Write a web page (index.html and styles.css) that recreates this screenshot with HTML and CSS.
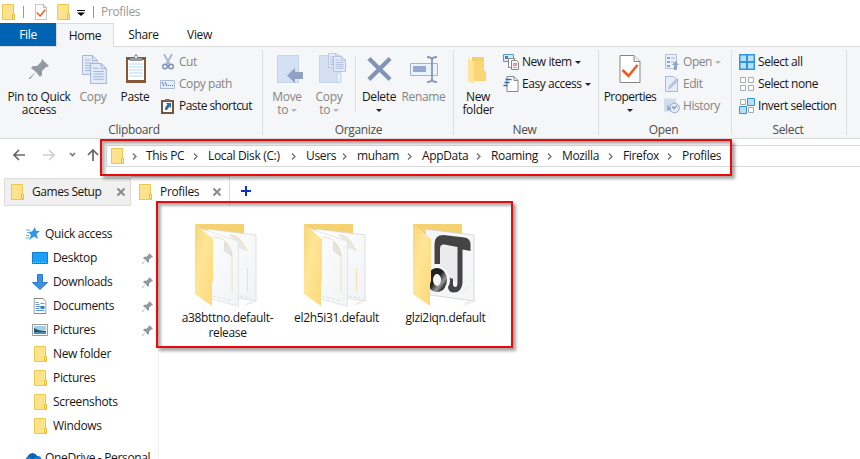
FILE: index.html
```html
<!DOCTYPE html>
<html lang="en">
<head>
<meta charset="utf-8">
<title>Profiles</title>
<link rel="stylesheet" href="styles.css">
</head>
<body>
<svg class="defs" aria-hidden="true">
  <defs>
    <linearGradient id="flap" x1="0" y1="0" x2="1" y2="1"><stop offset="0" stop-color="#f7d67a"/><stop offset=".4" stop-color="#ffe597"/><stop offset="1" stop-color="#fbd979"/></linearGradient>
    <linearGradient id="paper" x1="0" y1="0" x2="1" y2="1"><stop offset="0" stop-color="#fff"/><stop offset="1" stop-color="#f1f3f4"/></linearGradient>
    <linearGradient id="shade" x1="0" y1="0" x2="1" y2="0"><stop offset="0" stop-color="#bbb"/><stop offset="1" stop-color="#fff" stop-opacity="0"/></linearGradient>
    <linearGradient id="ring" x1="0" y1="0" x2="1" y2="1"><stop offset="0" stop-color="#222"/><stop offset=".45" stop-color="#222"/><stop offset=".75" stop-color="#999"/><stop offset="1" stop-color="#111"/></linearGradient>
  </defs>
  <symbol id="folder" viewBox="0 0 13 16"><path d="M.5.5h11v10h1v5H.5z" fill="#ffe38c" stroke="#edc84f"/><path d="M10.500 15v-4.500h2V15z" fill="#fff0b5" stroke="#e5bd3f"/></symbol>
  <symbol id="pin" viewBox="0 0 20 20"><path d="M13 0l7 7-2 1-1 0-4 4 0 4-2 2-4-5-6 7-1 0 0-1 7-6-5-4 2-2 4 0 4-4z" fill="#909ba1"/></symbol>
  <symbol id="check" viewBox="0 0 21 28"><path d="M.5.5h14l6 6v21H.5z" fill="#fff" stroke="#858585"/><path d="M14.500.5v6h6" fill="#eee" stroke="#858585"/><path d="M3 15l6 6 9-11" fill="none" stroke="#f1591b" stroke-width="2.500"/></symbol>
  <symbol id="sheet" viewBox="0 0 16 20"><path d="M.5.5h10l5 5v14H.5z" fill="#e3ebf8" stroke="#a8b8d5"/><path d="M10.500.5v5h5M3 5h5M3 8h10M3 10.500h10M3 13h10M3 15.500h10" fill="none" stroke="#a4b5d5"/></symbol>
  <symbol id="copy" viewBox="0 0 25 29"><use href="#sheet" width="16" height="20"/><use href="#sheet" x="8" y="8" width="17" height="21"/></symbol>
  <symbol id="paste" viewBox="0 0 20 29"><path d="M0 3h20v26H0z" fill="#865835"/><path d="M2 6h16v20H2z" fill="#fff"/><path d="M3 10h14M3 13h14M3 16h14M3 19h14M3 22h14" stroke="#b3d9f1"/><path d="M4 7V4h4c0-5 4-5 4 0h4v3z" fill="#949ca2"/><circle cx="10" cy="3" r="1" fill="#fff"/></symbol>
  <symbol id="cut" viewBox="0 0 12 16"><path d="M2 0l6 11M10 0L4 11" stroke="#a4b5d0" stroke-width="1.800"/><circle cx="3" cy="12.500" r="2.300" fill="none" stroke="#7c91b9" stroke-width="1.500"/><circle cx="9" cy="12.500" r="2.300" fill="none" stroke="#7c91b9" stroke-width="1.500"/></symbol>
  <symbol id="path" viewBox="0 0 15 9"><path d="M.5.5h14v8H.5z" fill="#e4edf9" stroke="#abbdd8"/><path d="M2 2l2 4M5 2l2 4M8 5.500h1M10 5.500h1M12 5.500h1" stroke="#5f78a4"/></symbol>
  <symbol id="shortcut" viewBox="0 0 13 16"><path d="M0 2h13v14H0z" fill="#75543c"/><path d="M2 4h9v10H2z" fill="#fff"/><path d="M4 3V1h5v2z" fill="#777"/><path d="M5 5h5v5L8.500 8.500 6 12H4c0-3 1-4 2.500-5.500z" fill="#2c6fad"/></symbol>
  <symbol id="move" viewBox="0 0 26 29"><path d="M.5.5h21v27H.5z" fill="#d3e1f3" stroke="#c4d4e9"/><path d="M17 17h4v10h-4z" fill="#e8f0fb" stroke="#c4d4e9"/><path d="M10 20.500l8-7.500v4h8v7h-8v4z" fill="#8fa2c2"/></symbol>
  <symbol id="copyto" viewBox="0 0 27 31"><path d="M.5 2.500h21v27H.5z" fill="#d3e1f3" stroke="#c4d4e9"/><path d="M18 20h4v9h-4z" fill="#e8f0fb" stroke="#c4d4e9"/><use href="#sheet" x="9" width="12" height="15"/><use href="#sheet" x="14" y="3" width="13" height="16"/></symbol>
  <symbol id="delete" viewBox="0 0 26 26"><path d="M2 2l22 22M24 2L2 24" stroke="#8294b5" stroke-width="4.500"/></symbol>
  <symbol id="rename" viewBox="0 0 28 27"><path d="M.5 7.500h27v12H.5z" fill="#eaf2fc" stroke="#a2b4d3"/><path d="M3 10h13v6H3z" fill="#96a9ca"/><path d="M17 1c3 0 5 1 5 3v19c0 2-2 3-5 3M27 1c-3 0-5 1-5 3v19c0 2 2 3 5 3" fill="none" stroke="#8598ba" stroke-width="1.800"/></symbol>
  <symbol id="newfolder" viewBox="0 0 19 28"><path d="M4 0h12v14h2v10H4z" fill="#f5cf6b"/><path d="M0 1l6 4v22l-6-3z" fill="#ffe49a"/><path d="M6 4h10v10h2v10H6z" fill="#f9d573"/></symbol>
  <symbol id="newitem" viewBox="0 0 16 16"><path d="M.5.5h10v7H.5z" fill="#d7ecfb" stroke="#5599ca"/><path d="M2 2h3v3H2z" fill="#4384b6"/><path d="M5.500 4.500h6v9h-6z" fill="#fff" stroke="#888"/><path d="M8.500 6.500h5l2 2v7h-7z" fill="#fff" stroke="#858585"/><path d="M10 9.500h4M10 11.500h4M10 13.500h4" stroke="#8aacd2"/><path d="M10 10.500h4" stroke="#e7a197"/></symbol>
  <symbol id="easy" viewBox="0 0 15 16"><path d="M3.500.5h7l4 4v11h-11z" fill="#fff" stroke="#888"/><path d="M10.500.5v4h4" fill="none" stroke="#888"/><path d="M2 3.500h6M1 6.500h5M0 9.500h4" stroke="#286dac" stroke-width="1.400"/></symbol>
  <symbol id="open" viewBox="0 0 14 16"><path d="M.5.500h11v14H.5z" fill="#eaf1fa" stroke="#b0c0d9"/><path d="M2 3h3v2H2zM2 7h3v2H2zM2 11h3v2H2z" fill="#8fa4c8"/><path d="M6 4h4M6 8h3" stroke="#a8b9d5"/><path d="M10.500 7l3.500 4h-2v5H9v-5H7z" fill="#90a4c6"/></symbol>
  <symbol id="edit" viewBox="0 0 14 16"><path d="M.5.500h8l4 4v11H.5z" fill="#e5edf8" stroke="#a9bad5"/><path d="M3 14l1-4 8-8 2 2-8 8z" fill="#b3c4df"/></symbol>
  <symbol id="history" viewBox="0 0 16 15"><path d="M0 0h12v13H0z" fill="#cfddef"/><circle cx="10.500" cy="9.500" r="4.800" fill="#e4ebf7" stroke="#96a8c8"/><path d="M8 8l2 2 3-3M4 7v4l3-1" fill="none" stroke="#8498bd" stroke-width="1.300"/></symbol>
  <symbol id="selall" viewBox="0 0 16 16"><path d="M0 0h16v16H0z" fill="#2f94e1"/><path d="M1.500 1.500h5.500v5.500H1.500zM9 1.500h5.500v5.500H9zM1.500 9h5.500v5.500H1.500zM9 9h5.500v5.500H9z" fill="#b8e0fb"/></symbol>
  <symbol id="selnone" viewBox="0 0 16 16"><path d="M1.500 1.500h5v5h-5zM9.500 1.500h5v5h-5zM1.500 9.500h5v5h-5zM9.500 9.500h5v5h-5z" fill="#fff" stroke="#aaa"/></symbol>
  <symbol id="selinv" viewBox="0 0 16 16"><path d="M1.500 1.500h5v5h-5zM9.500 9.500h5v5h-5z" fill="#fff" stroke="#aaa"/><path d="M8.500.5h7v7h-7zM.5 8.500h7v7h-7z" fill="#b8e0fb" stroke="#2f94e1"/></symbol>
  <symbol id="star" viewBox="0 0 14 13"><path d="M9 0l1 4 4 0-3.500 3 1.500 5-4-2.500-5 3.500 2-5L2 5l4-.5z" fill="#2f98e5"/><path d="M0 3h4M1 5.500h3M0 8.500h3M0 11h3" stroke="#57aee8"/></symbol>
  <symbol id="desktop" viewBox="0 0 16 12"><path d="M.5.500h15v11H.5z" fill="#1ba1fa" stroke="#137bc8"/><path d="M1 10.500h14" stroke="#8bd0ff" stroke-dasharray="1 1"/></symbol>
  <symbol id="down" viewBox="0 0 16 16"><path d="M5.500.5h5v8h5L8 15.500.5 8.500h5z" fill="#3e91de" stroke="#2b7acb"/></symbol>
  <symbol id="doc" viewBox="0 0 13 16"><path d="M.5.500h9l3 3v12H.5z" fill="#fff" stroke="#888"/><path d="M2 4.500h3M2 6.500h4M7 5.500h4M2 8.500h9M2 10.500h4M2 12.500h9" stroke="#5e9fce"/><path d="M7 8h4v3H7z" fill="#3384c3"/></symbol>
  <symbol id="pic" viewBox="0 0 16 12"><path d="M.5.500h15v11H.5z" fill="#fff" stroke="#999"/><path d="M2 2h12v4H2z" fill="#9dcdf0"/><path d="M2 4l4 2 8 1v3H2z" fill="#24546b"/><path d="M2 8h12v2H2z" fill="#5089b2"/></symbol>
  <symbol id="cloud" viewBox="0 0 18 11"><path d="M4 10a4 4 0 010-7 5 5 0 019 0 4 4 0 011 8H4z" fill="#1679cf"/><path d="M4 3a5 5 0 019 0L9 6z" fill="#0964b5"/></symbol>
  <symbol id="chev" viewBox="0 0 5 7"><path d="M1 .5l3 3-3 3" fill="none" stroke="#727272" stroke-width="1.300"/></symbol>
  <symbol id="x" viewBox="0 0 8 8"><path d="M.5.5l7 7M7.500.5l-7 7" stroke="#8a8a8a" stroke-width="2"/></symbol>
  <symbol id="fback" viewBox="0 0 72 84"><path d="M50 82l16-3c4-2 3-4-5-5z" fill="url(#shade)" opacity=".5"/><path d="M0 1h49v28H0z" fill="#f5d16f"/></symbol>
  <symbol id="fflap" viewBox="0 0 72 84"><path d="M0 1l18 15v42l-1 3v22L0 71z" fill="url(#flap)"/></symbol>
  <symbol id="bigfolder" viewBox="0 0 72 84">
    <use href="#fback" width="72" height="84"/>
    <path d="M12 6l49 6v66l-18-3-30-4z" fill="url(#paper)" stroke="#d4d4d4" stroke-width=".7"/>
    <path d="M35 12c9 0 12 5 17 16l-9-3z" fill="#e9e9e9"/><path d="M34 12c9 0 13 6 18 16M52.500 45v24" fill="none" stroke="#f0dba5" stroke-width=".8"/>
    <path d="M4 5l39.500 13v65.500L17 76z" fill="url(#paper)" stroke="#d8d8d8" stroke-width=".6"/><path d="M18 73l19 5M45 73l11 2" stroke="#c4c4c4" stroke-width=".5" stroke-dasharray="3 2"/>
    <path d="M29.500 19v9l7.500 5c-1-7-4-12-7.500-14z" fill="#e4e4e4" stroke="#ccc" stroke-width=".5"/><path d="M18 14c11 0 16 6 19 18v37" fill="none" stroke="#f0dba5" stroke-width=".8"/>
    <use href="#fflap" width="72" height="84"/>
  </symbol>
  <symbol id="jfolder" viewBox="0 0 72 84">
    <use href="#fback" width="72" height="84"/>
    <path d="M12 6l49 6v66l-44-6z" fill="#f5f6f7" stroke="#ccc" stroke-width=".7"/>
    <path d="M26 22l19 2v36l-9-4-10-16z" fill="#ebebed"/>
    <path d="M21.500 41V21q0-9 9-9l21 2.500q6 1 6 7V28l-8-1.500V60q-1 9.500-8.500 9.500-6 0-6-6V54l5 2v5q0 3 2.500 3 2 0 2-5V24L31 21.500q-4 0-4 4V41z" fill="#444"/>
    <circle cx="24" cy="57" r="13" fill="#f5f6f7"/><ellipse cx="24" cy="57" rx="7" ry="9" fill="#f7f7f7" stroke="url(#ring)" stroke-width="6"/>
    <path d="M50 70c3-1 3-4 4-7" fill="none" stroke="#f0dba5" stroke-width=".7"/>
    <use href="#fflap" width="72" height="84"/>
  </symbol>
</svg>

<header class="title"><svg class="i13"><use href="#folder"/></svg><i class="bar"></i><svg class="tcheck"><use href="#check"/></svg><svg class="i13"><use href="#folder"/></svg><svg class="menu" viewBox="0 0 8 6"><path d="M0 .5h8" stroke="#111"/><path d="M0 2.500h8L4 6z"/></svg><i class="bar"></i><span>Profiles</span></header>

<nav class="menus"><b class="file">File</b><b class="home">Home</b><b class="share">Share</b><b class="view">View</b></nav>

<section class="ribbon">
  <div class="group clip">
    <div class="tools">
      <div class="big"><svg viewBox="0 0 32 32"><use href="#pin" x="6" y="7" width="20" height="20"/></svg><span>Pin to Quick</span><span>access</span></div>
      <div class="big dim"><svg viewBox="0 0 32 32"><use href="#copy" x="5" y="3" width="25" height="29"/></svg><span>Copy</span></div>
      <div class="big"><svg viewBox="0 0 32 32"><use href="#paste" x="7" y="2" width="20" height="29"/></svg><span>Paste</span></div>
      <div class="list"><p class="dim"><svg viewBox="0 0 16 16"><use href="#cut" x="2" width="12" height="16"/></svg>Cut</p><p class="dim"><svg viewBox="0 0 16 16"><use href="#path" y="4" width="15" height="9"/></svg>Copy path</p><p class="snug"><svg viewBox="0 0 16 16"><use href="#shortcut" x="1" width="13" height="16"/></svg>Paste shortcut</p></div>
    </div><h2>Clipboard</h2>
  </div>
  <div class="group org">
    <div class="tools">
      <div class="big dim"><svg viewBox="0 0 32 32"><use href="#move" x="6" y="3" width="26" height="29"/></svg><span>Move</span><span>to <i class="tri"></i></span></div>
      <div class="big dim"><svg viewBox="0 0 32 32"><use href="#copyto" x="6" y="1" width="27" height="31"/></svg><span>Copy</span><span>to <i class="tri"></i></span></div>
      <i class="split"></i>
      <div class="big"><svg viewBox="0 0 32 32"><use href="#delete" x="4" y="4" width="25" height="26"/></svg><span>Delete</span><span><i class="tri"></i></span></div>
      <div class="big dim"><svg viewBox="0 0 32 32"><use href="#rename" x="2" y="4" width="28" height="27"/></svg><span>Rename</span></div>
    </div><h2>Organize</h2>
  </div>
  <div class="group new">
    <div class="tools">
      <div class="big"><svg viewBox="0 0 32 32"><use href="#newfolder" x="6" y="5" width="19" height="28"/></svg><span>New</span><span>folder</span></div>
      <div class="list"><p><svg><use href="#newitem"/></svg>New item <i class="tri"></i></p><p><svg><use href="#easy"/></svg>Easy access <i class="tri"></i></p></div>
    </div><h2>New</h2>
  </div>
  <div class="group opn">
    <div class="tools">
      <div class="big"><svg viewBox="0 0 32 32"><use href="#check" x="5" y="3" width="22" height="28"/></svg><span class="snug">Properties</span><span><i class="tri"></i></span></div>
      <div class="list dim"><p><svg><use href="#open"/></svg>Open <i class="tri"></i></p><p><svg><use href="#edit"/></svg>Edit</p><p><svg><use href="#history"/></svg>History</p></div>
    </div><h2>Open</h2>
  </div>
  <div class="group sel">
    <div class="tools"><div class="list"><p><svg><use href="#selall"/></svg>Select all</p><p><svg><use href="#selnone"/></svg>Select none</p><p><svg><use href="#selinv"/></svg>Invert selection</p></div></div><h2>Select</h2>
  </div>
</section>

<section class="address">
  <svg class="arrows" viewBox="0 0 100 20"><g fill="none" stroke-width="1.700"><path d="M25 10H14M19 5l-5 5 5 5" stroke="#666"/><path d="M43 10h11M49 5l5 5-5 5" stroke="#d0d0d0"/><path d="M70 8l2.500 2.500L75 8" stroke="#777"/><path d="M93 16V5M88 10l5-5 5 5" stroke="#666"/></g></svg>
  <div class="crumbs"><svg class="i13"><use href="#folder"/></svg>
    <svg class="chev c0"><use href="#chev"/></svg><span class="w1">This PC</span><svg class="chev"><use href="#chev"/></svg><span class="w2">Local Disk (C:)</span><svg class="chev"><use href="#chev"/></svg><span class="w3">Users</span><svg class="chev"><use href="#chev"/></svg><span class="w4">muham</span><svg class="chev"><use href="#chev"/></svg><span class="w5">AppData</span><svg class="chev"><use href="#chev"/></svg><span class="w6">Roaming</span><svg class="chev"><use href="#chev"/></svg><span class="w7">Mozilla</span><svg class="chev"><use href="#chev"/></svg><span class="w8">Firefox</span><svg class="chev"><use href="#chev"/></svg><span>Profiles</span></div>
</section>

<nav class="tabs">
  <div class="tab idle"><svg class="i13"><use href="#folder"/></svg><span>Games Setup</span><svg class="close"><use href="#x"/></svg></div>
  <div class="tab active"><svg class="i13"><use href="#folder"/></svg><span>Profiles</span><svg class="close"><use href="#x"/></svg></div>
  <svg class="plus" viewBox="0 0 10 10"><path d="M5 0v10M0 5h10" stroke="#0b32c8" stroke-width="2"/></svg>
</nav>

<main>
  <aside>
    <div class="row root"><svg viewBox="0 0 16 16"><use href="#star" x="1" y="1" width="14" height="13"/></svg><span>Quick access</span></div>
    <div class="row"><svg viewBox="0 0 16 16"><use href="#desktop" y="2" width="16" height="12"/></svg><span>Desktop</span><svg class="pinned"><use href="#pin"/></svg></div>
    <div class="row"><svg viewBox="0 0 16 16"><use href="#down" width="16" height="16"/></svg><span>Downloads</span><svg class="pinned"><use href="#pin"/></svg></div>
    <div class="row"><svg viewBox="0 0 16 16"><use href="#doc" x="1.500" width="13" height="16"/></svg><span>Documents</span><svg class="pinned"><use href="#pin"/></svg></div>
    <div class="row"><svg viewBox="0 0 16 16"><use href="#pic" y="2" width="16" height="12"/></svg><span>Pictures</span><svg class="pinned"><use href="#pin"/></svg></div>
    <div class="row"><svg viewBox="0 0 16 16"><use href="#folder" x="2" width="13" height="16"/></svg><span>New folder</span></div>
    <div class="row"><svg viewBox="0 0 16 16"><use href="#folder" x="2" width="13" height="16"/></svg><span>Pictures</span></div>
    <div class="row"><svg viewBox="0 0 16 16"><use href="#folder" x="2" width="13" height="16"/></svg><span>Screenshots</span></div>
    <div class="row"><svg viewBox="0 0 16 16"><use href="#folder" x="2" width="13" height="16"/></svg><span>Windows</span></div>
    <div class="row root drive"><svg viewBox="0 0 16 16"><use href="#cloud" x="-1" y="3" width="18" height="11"/></svg><span>OneDrive - Personal</span></div>
  </aside>
  <div class="files">
    <figure><svg><use href="#bigfolder"/></svg><figcaption>a38bttno.default-<br>release</figcaption></figure>
    <figure><svg><use href="#bigfolder"/></svg><figcaption>el2h5i31.default</figcaption></figure>
    <figure><svg><use href="#jfolder"/></svg><figcaption>glzi2iqn.default</figcaption></figure>
  </div>
</main>
<div class="mark mark-path"></div>
<div class="mark mark-files"></div>
</body>
</html>
```
FILE: styles.css
```css
* { box-sizing: border-box; }
body { margin: 0; width: 860px; height: 459px; overflow: hidden; position: relative; background: #fff; color: #171717; font: 12px/14px "Open Sans", sans-serif; letter-spacing: -.34px; white-space: nowrap; }
.defs { position: absolute; width: 0; height: 0; }
svg { display: block; flex: none; overflow: visible; }
p, h2, figure { margin: 0; font: inherit; }
b { font-weight: normal; }
.i13 { width: 13px; height: 16px; }

.title { height: 23px; display: flex; align-items: center; padding-left: 2px; color: #999; }
.title .bar { width: 1px; height: 12px; margin: 0 11px 0 8px; background: #999; }
.title .tcheck { width: 12px; height: 16px; margin-right: 10px; }
.title .menu { width: 8px; height: 6px; margin: 3px 0 0 7px; }
.title .menu + .bar { margin-right: 7px; }

.menus { height: 24px; display: flex; line-height: 24px; text-align: center; }
.file { width: 56px; height: 23px; background: #0063b1; color: #fff; }
.home { width: 58px; background: #f5f6f7; border: 1px solid #dadbdc; border-bottom: 0; line-height: 23px; position: relative; }
.share { width: 59px; }
.view { width: 53px; }

.ribbon { height: 93px; margin-top: -1px; display: flex; background: #f5f6f7; border: solid #dadbdc; border-width: 1px 0; }
.group { height: 91px; padding-top: 4px; position: relative; }
.group::after { content: ""; position: absolute; right: 0; top: 3px; width: 1px; height: 85px; background: #dedfe0; }
.tools { display: flex; height: 72px; }
.group h2 { text-align: center; line-height: 13px; color: #4c4c4c; }
.big { display: flex; flex-direction: column; align-items: center; }
.big svg { width: 32px; height: 32px; margin: 1px 0 6px; }
.big span { height: 13px; line-height: 13px; }
.list p { height: 22px; display: flex; align-items: center; gap: 3px; letter-spacing: -.45px; }
.list svg { width: 16px; height: 16px; }
.list .snug, .big .snug { letter-spacing: -.55px; }
.dim { color: #858585; }
.tri { display: inline-block; vertical-align: 2px; border: solid transparent; border-width: 3px 3px 0; border-top-color: #222; }
.dim .tri { border-top-color: #b4b4b4; }
.clip { width: 263px; padding-left: 5px; }
.clip .big:nth-child(1) { width: 68px; }
.clip .big:nth-child(2) { width: 40px; }
.clip .big:nth-child(3) { width: 44px; margin-right: 3px; }
.org { width: 191px; }
.org .tools { padding-left: 2px; }
.org .big:nth-child(1) { width: 44px; }
.org .big:nth-child(2) { width: 40px; }
.org .big:nth-child(4) { width: 44px; }
.org .big:nth-child(5) { width: 45px; }
.split { width: 1px; height: 56px; margin: 5px 1px 0 6px; background: #dedfe0; }
.new { width: 145px; }
.new .tools { padding-left: 4px; }
.new .big { width: 40px; margin-right: 5px; }
.new h2 { padding-right: 4px; }
.opn { width: 133px; }
.opn .tools { padding-left: 3px; }
.opn .big { width: 56px; margin-right: 6px; }
.opn h2 { padding-right: 4px; }
.sel { width: 115px; }
.sel .tools { padding-left: 7px; }
.sel h2 { padding-right: 3px; }

.address { display: flex; height: 37px; padding-top: 6px; }
.arrows { width: 100px; height: 20px; }
.crumbs { flex: 1; margin-left: 6px; height: 22px; border: 1px solid #d9d9d9; border-right: 0; display: flex; align-items: center; padding-left: 4px; }
.chev { width: 5px; height: 7px; margin: 0 10px 0 9px; }
.c0 { margin-right: 9px; margin-left: 8px; }
.w1 { width: 38px; } .w2 { width: 74px; } .w3 { width: 27px; } .w4 { width: 41px; } .w5 { width: 45px; } .w6 { width: 47px; } .w7 { width: 37px; } .w8 { width: 35px; }

.tabs { display: flex; height: 30px; padding-left: 4px; }
.tab { display: flex; align-items: center; }
.tab span { flex: 1; margin-left: 8px; }
.idle { width: 127px; height: 28px; margin-top: 2px; padding: 0 5px 0 6px; background: #f0f0f0; border: 1px solid #dcdcdc; letter-spacing: -.45px; }
.active { width: 99px; padding: 0 8px 0 8px; border: solid #dcdcdc; border-width: 1px 1px 0 0; }
.close { width: 8px; height: 8px; }
.plus { width: 10px; height: 10px; margin: 10px 0 0 11px; }

main { display: flex; height: 253px; }
aside { width: 159px; border-right: 1px solid #f0f0f0; padding-top: 16px; overflow: hidden; }
.row { height: 24px; display: flex; align-items: center; gap: 5px; padding: 0 5px 0 32px; }
.row svg { width: 16px; height: 16px; }
.row .pinned { width: 11px; height: 11px; margin-left: auto; }
.root { padding-left: 25px; gap: 4px; }
.drive { margin-top: 8px; }
.files { display: flex; padding: 17px 0 0 14px; }
figure { width: 109px; text-align: center; }
figure svg { width: 72px; height: 84px; margin-left: 22px; }
figcaption { margin-top: 3px; line-height: 15px; }

.mark { position: absolute; border: 2px solid #f00808; box-shadow: 3px 3px 3px rgba(0,0,0,.35), inset 3px 3px 3px rgba(0,0,0,.3); }
.mark-path { left: 100px; top: 139px; width: 632px; height: 37px; }
.mark-files { left: 156px; top: 201px; width: 357px; height: 147px; }
```
